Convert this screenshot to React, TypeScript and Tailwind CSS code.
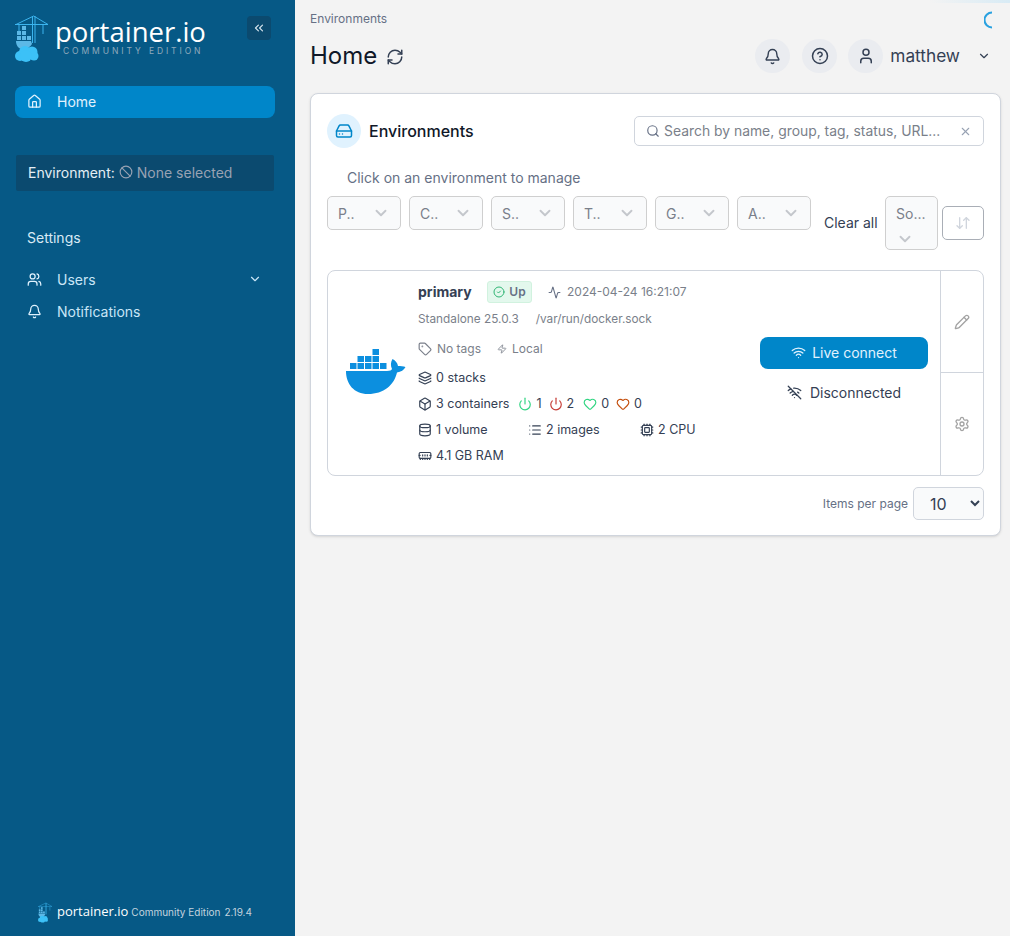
// App.tsx — Portainer home, environments list
import {
  Activity,
  ArrowDownUp,
  Ban,
  Bell,
  Box,
  ChevronDown,
  ChevronsLeft,
  CircleCheck,
  CircleHelp,
  Cpu,
  Database,
  HardDrive,
  Heart,
  Home,
  Layers,
  List,
  MemoryStick,
  Pencil,
  Power,
  RefreshCw,
  Search,
  Settings,
  Tag,
  User,
  Users,
  Wifi,
  WifiOff,
  X,
  Zap,
} from "lucide-react";

const FILTERS = ["P..", "C..", "S..", "T..", "G..", "A.."];

function CraneLogo({ className }: { className: string }) {
  return (
    <svg viewBox="0 0 33 47" className={className} fill="none">
      <g stroke="#3bb4ee" strokeWidth="1">
        <path d="M0 9.500h33M17.500 1v27M20 1v27M18.700 1L1 9.500M18.700 1L33 9.500" />
        <path d="M4 10v6M28 10v9" />
      </g>
      <g fill="#5cb8e6">
        <rect x="2" y="16" width="4" height="4" />
        <rect x="7" y="16" width="4" height="4" />
        <rect x="2" y="21" width="4" height="4" />
        <rect x="7" y="21" width="4" height="4" />
        <rect x="12" y="21" width="4" height="4" />
        <rect x="7" y="11" width="4" height="4" />
        <path d="M1 26h15l1 3c-2 3-4 4-7 5H6c-3-1-5-4-5-8z" />
      </g>
      <g fill="#3cc1f7">
        <circle cx="5" cy="41" r="5" />
        <circle cx="10" cy="37" r="6" />
        <circle cx="17" cy="37" r="5.500" />
        <circle cx="19" cy="41" r="4.500" />
        <circle cx="11" cy="41" r="6" />
      </g>
    </svg>
  );
}

function DockerLogo() {
  return (
    <svg viewBox="0 0 61 45" className="w-[61px] h-[45px]" fill="#0c8fdf">
      <rect x="5" y="14" width="6.500" height="6" />
      <rect x="12.500" y="14" width="6.500" height="6" />
      <rect x="20" y="14" width="6.500" height="6" />
      <rect x="27.500" y="14" width="6.500" height="6" />
      <rect x="35" y="14" width="6.500" height="6" />
      <rect x="12.500" y="7" width="6.500" height="6" />
      <rect x="20" y="7" width="6.500" height="6" />
      <rect x="27.500" y="7" width="6.500" height="6" />
      <rect x="27.500" y="0" width="6.500" height="6" />
      <path d="M1 22h41c3 0 4.600-1 5-2-1.500-3-1.500-7 .5-10 3 1.500 5 4 5.500 7 2.500 0 5.500 0 7.500 1-1.500 3-4.500 5-8.500 5.500C49 36 39 45 23 45 9 45 1 35 1 22z" />
    </svg>
  );
}

function IconCircle({ children }: { children: React.ReactNode }) {
  return (
    <div className="w-[35px] h-[34px] shrink-0 rounded-full bg-[#eaecf0] flex items-center justify-center text-[#344054]">
      {children}
    </div>
  );
}

function FilterSelect({ label }: { label: string }) {
  return (
    <div className="w-[74px] h-[34px] shrink-0 rounded-[5px] border border-[#cfcfcf] bg-[#f9fafb] flex items-center justify-between px-[10px] text-[14px] text-[#7a7f8a]">
      <span>{label}</span>
      <ChevronDown className="w-[18px] h-[18px] text-[#c4c7cc]" strokeWidth={2.5} />
    </div>
  );
}

function Stat({ icon, label, className }: { icon: React.ReactNode; label: string; className?: string }) {
  return (
    <span className={`flex items-center gap-[4px] ${className ?? ""}`}>
      {icon}
      {label}
    </span>
  );
}

function Sidebar() {
  return (
    <aside className="w-[295px] shrink-0 h-[936px] bg-[#065986] flex flex-col text-[14px]">
      {/* logo */}
      <div className="h-[86px] flex items-start justify-between pl-[15px] pr-[24px] pt-[15px]">
        <div className="flex">
          <CraneLogo className="w-[33px] h-[47px]" />
          <div className="ml-[7px]">
            <div className="mt-[3px] font-['Open_Sans',sans-serif] font-medium text-[27.500px] leading-[28px] text-white">
              portainer.io
            </div>
            <div className="ml-[8px] text-[8.500px] leading-[10px] tracking-[2.900px] text-[#8fa9bc]">
              COMMUNITY EDITION
            </div>
          </div>
        </div>
        <button className="w-[24px] h-[24px] mt-[1px] rounded-[4px] bg-[#0b4a6f] flex items-center justify-center text-[#d5e3ec]">
          <ChevronsLeft className="w-[14px] h-[14px]" />
        </button>
      </div>

      {/* nav */}
      <div className="mx-[15px] w-[260px] h-[32px] pb-[2px] rounded-[8px] bg-[#0086c9] flex items-center pl-[12px] text-[#e0f2fe]">
        <Home className="w-[15px] h-[15px] mr-[15px]" />
        Home
      </div>
      <div className="mt-[37px] mx-[16px] w-[258px] h-[36px] pb-[2px] rounded-[2px] bg-[#0b4a6f] flex items-center pl-[12px]">
        <span className="text-[#e4eef5]">Environment:</span>
        <Ban className="w-[14px] h-[14px] ml-[4px] mr-[4px] text-[#98a2b3]" />
        <span className="text-[#98a2b3]">None selected</span>
      </div>
      <div className="mt-[37px] pl-[27px] leading-[20px] text-[#d9eaf5]">Settings</div>
      <div className="mt-[16px] h-[32px] pb-[2px] flex items-center pl-[27px] pr-[33px] text-[#c9e6f7]">
        <Users className="w-[15px] h-[15px] mr-[15px] text-[#e0f2fe]" />
        Users
        <ChevronDown className="w-[14px] h-[14px] ml-auto" />
      </div>
      <div className="h-[32px] pb-[2px] flex items-center pl-[27px] text-[#c9e6f7]">
        <Bell className="w-[15px] h-[15px] mr-[15px] text-[#e0f2fe]" />
        Notifications
      </div>

      {/* footer */}
      <div className="mt-auto mb-[13px] flex items-center pl-[38px] h-[22px]">
        <CraneLogo className="w-[14px] h-[21px]" />
        <span className="ml-[5px] font-['Open_Sans',sans-serif] text-[13px] text-white">portainer.io</span>
        <span className="ml-[3px] text-[10px] text-[#c3d3df]">Community Edition</span>
        <span className="ml-[4px] text-[10px] text-[#c3d3df]">2.19.4</span>
      </div>
    </aside>
  );
}

function EnvironmentCard() {
  return (
    <div className="h-[206px] rounded-[8px] border border-[#d0d5dd] flex">
      <div className="w-[90px] shrink-0 flex items-center pl-[17px] pb-[3px]">
        <DockerLogo />
      </div>
      <div className="w-[332px] shrink-0 text-[12.500px] text-[#344054]">
        <div className="h-[22px] mt-[10px] flex items-center">
          <span className="text-[14px] font-bold text-[#344054] w-[69px] mt-[-2px]">primary</span>
          <span className="w-[45px] h-[22px] rounded-[3px] bg-[#e3f8ed] border border-[#d1f2df] flex items-center justify-center gap-[4px] text-[12px] font-semibold text-[#667085]">
            <CircleCheck className="w-[12px] h-[12px] text-[#2fb574]" />
            Up
          </span>
          <Activity className="w-[13px] h-[13px] ml-[16px] text-[#667085]" />
          <span className="ml-[6px] text-[12px] text-[#7a7f8a]">2024-04-24 16:21:07</span>
        </div>
        <div className="mt-[9px] h-[16px] flex items-center text-[11.800px] text-[#7a7f8a]">
          <span>Standalone 25.0.3</span>
          <span className="ml-[17px]">/var/run/docker.sock</span>
        </div>
        <div className="mt-[13px] h-[16px] flex items-center text-[12px] text-[#7a7f8a]">
          <Tag className="w-[14px] h-[14px] mr-[5px]" />
          No tags
          <Zap className="w-[10px] h-[10px] ml-[16px] mr-[5px]" />
          Local
        </div>
        <div className="mt-[13px] h-[16px] flex items-center">
          <Stat icon={<Layers className="w-[14px] h-[14px]" />} label="0 stacks" />
        </div>
        <div className="mt-[10px] h-[16px] flex items-center">
          <Stat icon={<Box className="w-[14px] h-[14px]" />} label="3 containers" />
          <Stat className="ml-[9px]" icon={<Power className="w-[14px] h-[14px] text-[#32d583]" />} label="1" />
          <Stat className="ml-[7px]" icon={<Power className="w-[14px] h-[14px] text-[#c53b35]" />} label="2" />
          <Stat className="ml-[9px]" icon={<Heart className="w-[14px] h-[14px] text-[#32d583]" />} label="0" />
          <Stat className="ml-[7px]" icon={<Heart className="w-[14px] h-[14px] text-[#c4500f]" />} label="0" />
        </div>
        <div className="mt-[10px] h-[16px] flex items-center">
          <Stat className="w-[110px]" icon={<Database className="w-[14px] h-[14px]" />} label="1 volume" />
          <Stat className="w-[112px]" icon={<List className="w-[14px] h-[14px]" />} label="2 images" />
          <Stat icon={<Cpu className="w-[14px] h-[14px]" />} label="2 CPU" />
        </div>
        <div className="mt-[10px] h-[16px] flex items-center">
          <Stat icon={<MemoryStick className="w-[14px] h-[14px]" />} label="4.1 GB RAM" />
        </div>
      </div>
      <div className="flex-1 pt-[66px] pr-[12px] pl-[10px]">
        <button className="w-[168px] h-[32px] pb-[2px] rounded-[8px] bg-[#0086c9] flex items-center justify-center gap-[6px] text-[14px] text-[#e0f2fe]">
          <Wifi className="w-[15px] h-[15px]" />
          Live connect
        </button>
        <div className="mt-[13px] h-[20px] flex items-center justify-center gap-[8px] text-[14px] text-[#344054]">
          <WifiOff className="w-[15px] h-[15px]" />
          Disconnected
        </div>
      </div>
      <div className="w-[43px] shrink-0 border-l border-[#d0d5dd] flex flex-col text-[#a3a3a3]">
        <div className="h-[102px] border-b border-[#d0d5dd] flex items-center justify-center">
          <Pencil className="w-[16px] h-[16px]" />
        </div>
        <div className="flex-1 flex items-center justify-center">
          <Settings className="w-[16px] h-[16px]" />
        </div>
      </div>
    </div>
  );
}

export default function App() {
  return (
    <div className="relative w-[1010px] h-[936px] overflow-hidden flex bg-[#f3f3f3] font-['Inter',sans-serif]">
      <Sidebar />

      <main className="flex-1 pl-[15px] pr-[9px]">
        {/* page header */}
        <div className="pt-[11px] text-[12px] leading-[16px] text-[#667085]">Environments</div>
        <div className="mt-[12px] h-[34px] flex items-center pr-[10px]">
          <h1 className="text-[24px] leading-[34px] text-[#101828]">Home</h1>
          <RefreshCw className="w-[18px] h-[18px] ml-[9px] mt-[2px] text-[#344054]" />
          <div className="ml-auto flex items-center">
            <div className="mr-[12px]">
              <IconCircle>
                <Bell className="w-[17px] h-[17px]" />
              </IconCircle>
            </div>
            <IconCircle>
              <CircleHelp className="w-[18px] h-[18px]" />
            </IconCircle>
            <div className="flex items-center ml-[11px]">
              <IconCircle>
                <User className="w-[18px] h-[18px]" />
              </IconCircle>
              <span className="ml-[7px] text-[17.250px] text-[#344054] whitespace-nowrap">matthew</span>
              <ChevronDown className="w-[14px] h-[14px] ml-[17px] text-[#344054]" />
            </div>
          </div>
        </div>

        {/* environments panel */}
        <section className="mt-[20px] w-[691px] h-[443px] rounded-[8px] bg-white border border-[#d0d5dd] shadow-sm px-[16px]">
          <div className="pt-[20px] flex items-center">
            <div className="w-[34px] h-[34px] rounded-full bg-[#e0f2fe] flex items-center justify-center">
              <HardDrive className="w-[18px] h-[18px] text-[#0086c9]" />
            </div>
            <span className="ml-[8px] text-[16px] font-medium text-[#101828]">Environments</span>
            <div className="ml-auto w-[350px] h-[30px] rounded-[5px] border border-[#d0d5dd] flex items-center px-[11px] text-[13.900px] text-[#7a7f8a] whitespace-nowrap">
              <Search className="w-[14px] h-[14px] mr-[4px] text-[#667085]" />
              Search by name, group, tag, status, URL...
              <X className="w-[13px] h-[13px] ml-auto text-[#98a2b3]" />
            </div>
          </div>

          <p className="mt-[20px] pl-[20px] text-[14px] leading-[20px] text-[#667085]">Click on an environment to manage</p>

          <div className="mt-[8px] h-[54px] flex items-start gap-[8px]">
            {FILTERS.map((label) => (
              <FilterSelect key={label} label={label} />
            ))}
            <span className="ml-[5px] mr-[-8px] mt-[17px] w-[61px] shrink-0 whitespace-nowrap text-[14px] leading-[20px] text-[#344054]">Clear all</span>
            <div className="w-[53px] h-[54px] shrink-0 rounded-[5px] border border-[#cfcfcf] bg-[#f9fafb] pl-[10px] pt-[7px] text-[14px] leading-[20px] text-[#7a7f8a]">
              <div>So...</div>
              <ChevronDown className="w-[18px] h-[18px] mt-[6px] text-[#c4c7cc]" strokeWidth={2.5} />
            </div>
            <button className="ml-[-4px] mt-[10px] w-[42px] h-[34px] shrink-0 rounded-[5px] border border-[#a9aeb6] flex items-center justify-center text-[#d0d5dd]">
              <ArrowDownUp className="w-[16px] h-[16px]" />
            </button>
          </div>

          <div className="mt-[20px]">
            <EnvironmentCard />
          </div>

          <div className="mt-[11px] flex items-center justify-end">
            <span className="text-[12px] text-[#667085]">Items per page</span>
            <select className="ml-[5px] w-[71px] h-[33px] rounded-[5px] border border-[#d0d5dd] bg-[#f9fafb] pl-[12px] pr-[6px] text-[16px] text-[#344054]">
              <option>10</option>
            </select>
          </div>
        </section>
      </main>

      {/* top loading bar glow and spinner */}
      <div className="absolute right-0 top-0 w-[80px] h-[3px] bg-gradient-to-r from-transparent to-[#d8ebf5]" />
      <svg viewBox="0 0 18 18" className="absolute right-[8px] top-[11px] w-[18px] h-[18px]" fill="none">
        <path d="M8 1.500A7.500 7.500 0 0 0 8 16.500" stroke="#29a1e0" strokeWidth="2" />
      </svg>
    </div>
  );
}
